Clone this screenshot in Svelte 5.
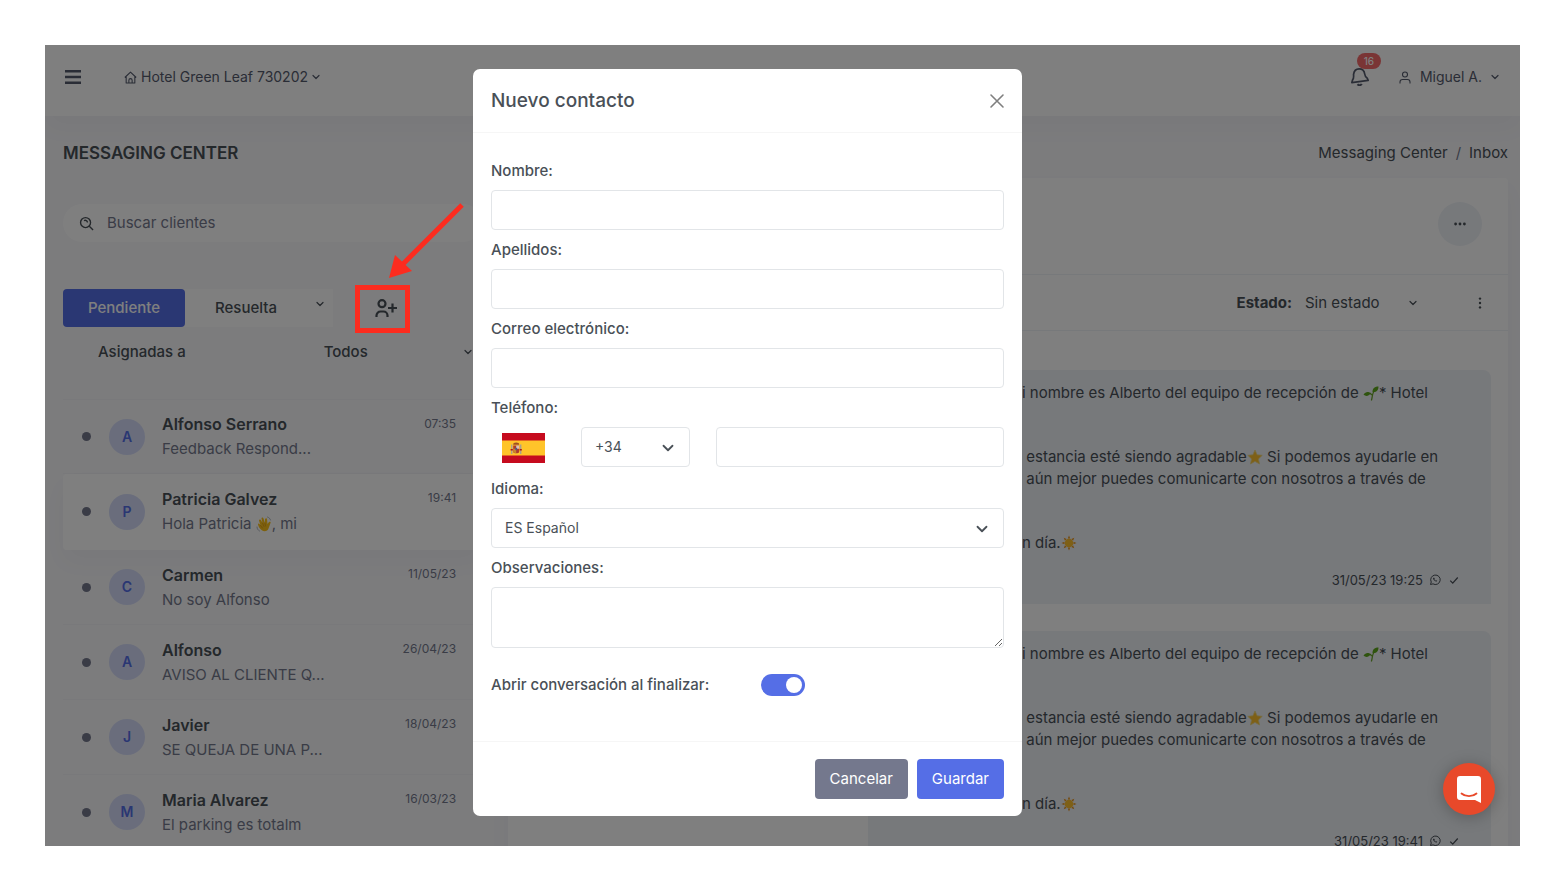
<script lang="ts">
  type Conversation = {
    name: string;
    preview: string;
    wave?: string;
    date: string;
    selected?: boolean;
  };

  const conversations: Conversation[] = [
    { name: 'Alfonso Serrano', preview: 'Feedback Respond...', date: '07:35' },
    { name: 'Patricia Galvez', preview: 'Hola Patricia ', wave: ', mi', date: '19:41', selected: true },
    { name: 'Carmen', preview: 'No soy Alfonso', date: '11/05/23' },
    { name: 'Alfonso', preview: 'AVISO AL CLIENTE Q...', date: '26/04/23' },
    { name: 'Javier', preview: 'SE QUEJA DE UNA P...', date: '18/04/23' },
    { name: 'Maria Alvarez', preview: 'El parking es totalm', date: '16/03/23' }
  ];

  const messageTimes = ['31/05/23 19:25', '31/05/23 19:41'];

  let search = $state('');
  let showModal = $state(true);
  let contact = $state({
    firstName: '',
    lastName: '',
    email: '',
    prefix: '+34',
    phone: '',
    language: 'es',
    notes: '',
    openConversation: true
  });

  function closeModal() {
    showModal = false;
  }

  function saveContact(event: SubmitEvent) {
    event.preventDefault();
    closeModal();
  }
</script>

{#snippet chevron(size: number)}
  <svg class="chevron" width={size} height={size} viewBox="0 0 16 16" fill="none" stroke="currentColor" stroke-width="2.4" stroke-linecap="round" stroke-linejoin="round" aria-hidden="true">
    <path d="M2 5l6 6 6-6" />
  </svg>
{/snippet}

{#snippet waveEmoji()}
  <svg class="emoji" viewBox="0 0 32 32" role="img" aria-label="saludo">
    <path d="M11 28C7 25 5 21 4 17c0-2 2-3 3-1l2 3L6 9c0-2 3-3 4-1l3 6-2-9c0-2 3-3 4 0l3 9 0-8c1-2 4-2 4 0l1 10 3-4c2-1 4 0 3 2l-4 11c-2 6-9 7-14 3z" fill="#fcc21b" />
    <path d="M13 14l3 7M18 14l1 6M9 19l4 5" stroke="#d89412" stroke-width="1.4" fill="none" stroke-linecap="round" />
    <path d="M2 22c0 4 2 6 5 8M23 2c3 1 5 3 6 6" stroke="#9aa3ad" stroke-width="1.6" fill="none" stroke-linecap="round" />
  </svg>
{/snippet}

{#snippet seedlingEmoji()}
  <svg class="emoji" viewBox="0 0 32 32" role="img" aria-label="brote">
    <path d="M17 30c2-6 1-11 5-18M18 20c-2-3-5-4-8-4" stroke="#6aa52b" stroke-width="2.6" fill="none" stroke-linecap="round" />
    <path d="M19 14c0-8 5-11 12-11 0 7-4 12-12 11z" fill="#5fa81d" />
    <path d="M15 17c-4 6-10 6-14 2 4-6 10-7 14-2z" fill="#5fa81d" />
  </svg>
{/snippet}

{#snippet starEmoji()}
  <svg class="emoji" viewBox="0 0 32 32" role="img" aria-label="estrella">
    <path d="M16 2l4.3 9.6 10.2 1-7.6 7.2 2.2 10.2L16 24.8 6.900 30l2.200-10.200-7.600-7.200 10.200-1z" fill="#fdc02f" stroke="#eadb8a" stroke-width="1.6" stroke-linejoin="round" />
  </svg>
{/snippet}

{#snippet sunEmoji()}
  <svg class="emoji" viewBox="0 0 32 32" role="img" aria-label="sol">
    <path d="M16 1l2.5 6h-5zM16 31l2.5-6h-5zM1 16l6-2.5v5zM31 16l-6-2.5v5zM5.4 5.4l6 2.5-3.5 3.5zM26.6 5.4l-2.500 6-3.500-3.500zM5.4 26.6l2.500-6 3.500 3.500zM26.6 26.6l-6-2.500 3.500-3.500z" fill="#e8951c" />
    <circle cx="16" cy="16" r="8.5" fill="#fdc02f" />
  </svg>
{/snippet}

{#snippet message(time: string)}
  <article class="bubble">
    <p>
      <span class="line"><span class="lead">Hola Patricia, m</span>i nombre es Alberto del equipo de recepción de {@render seedlingEmoji()}* Hotel</span>
      <span class="line">Green Leaf</span>
    </p>
    <p>
      <span class="line"><span class="lead">Espero que su</span>&nbsp;estancia esté siendo agradable{@render starEmoji()} Si podemos ayudarle en</span>
      <span class="line"><span class="lead">que sea</span>&nbsp;aún mejor puedes comunicarte con nosotros a través de</span>
      <span class="line">este chat.</span>
    </p>
    <p>
      <span class="line"><span class="lead">Bue</span>n día.{@render sunEmoji()}</span>
    </p>
    <footer class="bubble-meta">
      <time>{time}</time>
      <svg width="12" height="12" viewBox="0 0 24 24" fill="none" stroke="currentColor" stroke-width="2" role="img" aria-label="WhatsApp">
        <path d="M3 21l1.500-5A9.500 9.500 0 1 1 8 19.700z" />
        <path d="M8.500 7.500c-1 1-.5 3 1.500 5s4 3 5.500 2.500l1-1.500-2.200-1.200-1.100.9c-1-.4-2-1.400-2.400-2.400l.9-1-1.100-2.300z" fill="currentColor" stroke="none" />
      </svg>
      <svg class="tick" width="10" height="10" viewBox="0 0 16 16" fill="none" stroke="currentColor" stroke-width="2" aria-hidden="true">
        <path d="M2 9l4 4 8-9" />
      </svg>
    </footer>
  </article>
{/snippet}

<div class="page">
  <div class="app">
    <header class="topbar">
      <div class="topbar-left">
        <button type="button" class="menu-btn" aria-label="Menú">
          <svg width="16" height="14" viewBox="0 0 16 14" aria-hidden="true">
            <path d="M0 0h16v2.6H0zM0 5.700h16v2.600H0zM0 11.400h16V14H0z" fill="currentColor" />
          </svg>
        </button>
        <button type="button" class="hotel-btn">
          <svg width="13" height="13" viewBox="0 0 24 24" fill="none" stroke="currentColor" stroke-width="2" stroke-linejoin="round" aria-hidden="true">
            <path d="M1.500 12L12 2l10.500 10M4 10v12h16V10M9 22v-5a3 3 0 0 1 6 0v5" />
          </svg>
          Hotel Green Leaf 730202
          {@render chevron(8)}
        </button>
      </div>
      <div class="topbar-right">
        <button type="button" class="bell-btn" aria-label="Notificaciones">
          <svg width="18" height="18" viewBox="2 3 21 21" fill="none" stroke="currentColor" stroke-width="2" stroke-linejoin="round" aria-hidden="true">
            <path d="M3 20l1-3.500c1.500-1.500 1-4 1-6C5.500 6.500 8 4 11.500 4s6 2.500 6.500 6c.3 2.500.5 3.500 3 5l1 2.500z" />
            <path d="M9.500 22c1.500 1.500 4 1.500 5-.5" stroke-width="2.400" />
          </svg>
          <span class="badge">16</span>
        </button>
        <button type="button" class="user-btn">
          <svg width="12" height="13" viewBox="0 0 24 26" fill="none" stroke="currentColor" stroke-width="2.200" aria-hidden="true">
            <circle cx="12" cy="7" r="5" />
            <path d="M2 25v-3a5 5 0 0 1 5-5h10a5 5 0 0 1 5 5v3" />
          </svg>
          <span>Miguel A.</span>
          {@render chevron(8)}
        </button>
      </div>
    </header>

    <main class="content">
      <div class="title-row">
        <h1>MESSAGING CENTER</h1>
        <nav class="breadcrumb" aria-label="Ruta">
          <a href="#center">Messaging Center</a>
          <span class="separator">/</span>
          <a href="#inbox">Inbox</a>
        </nav>
      </div>

      <div class="columns">
        <aside class="sidebar">
          <label class="search">
            <svg width="15" height="15" viewBox="0 0 24 24" fill="none" stroke="currentColor" stroke-width="2.200" aria-hidden="true">
              <circle cx="10.500" cy="10.500" r="8" />
              <path d="M16.500 16.500l6 6M8 7.500c2.500-1.500 5.500 0 5.500 3" />
            </svg>
            <input type="search" placeholder="Buscar clientes" aria-label="Buscar clientes" bind:value={search} />
          </label>

          <div class="filters">
            <div class="tabs">
              <button type="button" class="tab active">Pendiente</button>
              <button type="button" class="tab">Resuelta</button>
              <button type="button" class="tab-more" aria-label="Más estados">{@render chevron(8)}</button>
            </div>
            <div class="add-contact">
              <button type="button" class="add-btn" aria-label="Nuevo contacto" onclick={() => (showModal = true)}>
                <svg width="22" height="18" viewBox="0 0 22 18" fill="none" stroke="currentColor" stroke-width="2.200" aria-hidden="true">
                  <circle cx="7" cy="4.700" r="3.500" />
                  <path d="M1.500 18v-1.500a4 4 0 0 1 4-4h3a4 4 0 0 1 4 4V18M17.500 4.500v9M13 9h9" />
                </svg>
              </button>
              <span class="highlight"></span>
              <svg class="arrow" width="80" height="80" viewBox="0 0 80 80" aria-hidden="true">
                <path d="M76 3L16 63" stroke="#fc2c1f" stroke-width="5" />
                <path d="M3 76L9 53L26 69z" fill="#fc2c1f" />
              </svg>
            </div>
          </div>

          <div class="assigned">
            <span>Asignadas a</span>
            <button type="button">Todos {@render chevron(8)}</button>
          </div>

          <ul class="conversations">
            {#each conversations as item}
              <li class:selected={item.selected}>
                <span class="dot"></span>
                <span class="avatar">{item.name[0]}</span>
                <div class="summary">
                  <div class="name">{item.name}</div>
                  <div class="preview">{item.preview}{#if item.wave}{@render waveEmoji()}{item.wave}{/if}</div>
                </div>
                <time>{item.date}</time>
              </li>
            {/each}
          </ul>
        </aside>

        <section class="chat">
          <div class="chat-head">
            <button type="button" class="round-btn" aria-label="Más opciones">
              <svg width="12" height="4" viewBox="0 0 12 4" fill="currentColor" aria-hidden="true">
                <circle cx="1.600" cy="2" r="1.400" /><circle cx="6" cy="2" r="1.400" /><circle cx="10.400" cy="2" r="1.400" />
              </svg>
            </button>
          </div>
          <div class="chat-status">
            <label for="status">Estado:</label>
            <div class="select-wrap status-select">
              <select id="status"><option>Sin estado</option></select>
              {@render chevron(8)}
            </div>
            <button type="button" class="dots-btn" aria-label="Opciones de la conversación">
              <svg width="4" height="12" viewBox="0 0 4 12" fill="currentColor" aria-hidden="true">
                <circle cx="2" cy="1.600" r="1.200" /><circle cx="2" cy="6" r="1.200" /><circle cx="2" cy="10.400" r="1.200" />
              </svg>
            </button>
          </div>
          <div class="messages">
            {#each messageTimes as time}
              {@render message(time)}
            {/each}
          </div>
        </section>
      </div>
    </main>

    {#if showModal}
      <div class="backdrop">
        <form class="modal" role="dialog" aria-modal="true" aria-labelledby="modal-title" onsubmit={saveContact}>
          <div class="modal-header">
            <h2 id="modal-title">Nuevo contacto</h2>
            <button type="button" class="close-btn" aria-label="Cerrar" onclick={closeModal}>
              <svg width="16" height="16" viewBox="0 0 16 16" fill="none" stroke="currentColor" stroke-width="1.600" stroke-linecap="round" aria-hidden="true">
                <path d="M2 2l12 12M14 2L2 14" />
              </svg>
            </button>
          </div>

          <div class="modal-body">
            <label for="first-name">Nombre:</label>
            <input id="first-name" class="control" type="text" bind:value={contact.firstName} />

            <label for="last-name">Apellidos:</label>
            <input id="last-name" class="control" type="text" bind:value={contact.lastName} />

            <label for="email">Correo electrónico:</label>
            <input id="email" class="control" type="email" bind:value={contact.email} />

            <label for="phone">Teléfono:</label>
            <div class="phone-row">
              <svg class="flag" width="43" height="30" viewBox="0 0 43 30" role="img" aria-label="España">
                <path d="M0 0h43v30H0z" fill="#c60b1e" />
                <path d="M0 7.500h43v15H0z" fill="#ffc42a" />
                <path d="M9 11.500h1.400V21H9zM18 11.500h1.400V21H18z" fill="#a9a08e" />
                <path d="M8.600 16h2.200v1.600H8.600zM17.600 16h2.200v1.600h-2.200z" fill="#ad1519" />
                <path d="M11.200 12.500h6v6.300c0 2-6 2-6 0z" fill="#ad3a30" />
                <path d="M14.200 12.500h3v3.300h-3z" fill="#d9c3bc" />
                <path d="M11.200 15.800h3v4.300c-1.500 0-3-.4-3-1.300z" fill="#c9852c" />
                <ellipse cx="14.200" cy="16" rx="1" ry="1.300" fill="#4b5a85" />
                <path d="M11.200 11.800c-.8-3 6.800-3 6 0z" fill="#a04f22" />
              </svg>
              <div class="select-wrap prefix">
                <select class="control" aria-label="Prefijo" bind:value={contact.prefix}>
                  <option value="+34">+34</option>
                </select>
                {@render chevron(12)}
              </div>
              <input id="phone" class="control" type="tel" bind:value={contact.phone} />
            </div>

            <label for="language">Idioma:</label>
            <div class="select-wrap">
              <select id="language" class="control" bind:value={contact.language}>
                <option value="es">ES Español</option>
              </select>
              {@render chevron(12)}
            </div>

            <label for="notes">Observaciones:</label>
            <textarea id="notes" class="control" bind:value={contact.notes}></textarea>

            <div class="switch-row">
              <label for="open-conversation">Abrir conversación al finalizar:</label>
              <input id="open-conversation" class="switch" type="checkbox" bind:checked={contact.openConversation} />
            </div>
          </div>

          <div class="modal-footer">
            <button type="button" class="btn secondary" onclick={closeModal}>Cancelar</button>
            <button type="submit" class="btn primary">Guardar</button>
          </div>
        </form>
      </div>
    {/if}

    <button type="button" class="chat-launcher" aria-label="Abrir chat de ayuda">
      <svg width="26" height="28" viewBox="0 0 26 28" aria-hidden="true">
        <path d="M4 1h18a3 3 0 0 1 3 3v24l-6-3H4a3 3 0 0 1-3-3V4a3 3 0 0 1 3-3z" fill="#fff" />
        <path d="M5.500 18.500c4 3.600 11 3.600 15 0" fill="none" stroke="#e8492a" stroke-width="1.800" stroke-linecap="round" />
      </svg>
    </button>
  </div>
</div>

<style>
  :global(body) {
    margin: 0;
    background: #fff;
  }

  .page {
    box-sizing: border-box;
    height: 100vh;
    padding: 45px 42px 36px 45px;
    font-family: Inter, 'Open Sans', sans-serif;
    font-size: 15px;
    line-height: 22px;
    color: #495057;
  }

  .page :global(*) {
    box-sizing: border-box;
  }

  .app {
    position: relative;
    display: flex;
    flex-direction: column;
    height: 100%;
    overflow: hidden;
    background: #f8f8fb;
  }

  button,
  input,
  select,
  textarea {
    font: inherit;
    color: inherit;
  }

  button {
    display: inline-flex;
    align-items: center;
    padding: 0;
    border: 0;
    background: none;
    cursor: pointer;
  }

  svg {
    flex: none;
  }

  h1,
  h2,
  p,
  ul {
    margin: 0;
    padding: 0;
  }

  a {
    color: inherit;
    text-decoration: none;
  }

  .topbar {
    display: flex;
    flex: none;
    justify-content: space-between;
    height: 71px;
    padding: 0 21px 7px 20px;
    background: #fff;
    color: #555b6d;
    font-size: 14px;
    box-shadow: 0 12px 24px rgba(18, 38, 63, 0.03);
  }

  .topbar-left,
  .topbar-right {
    display: flex;
    align-items: center;
  }

  .topbar-left {
    gap: 43px;
  }

  .topbar-right {
    gap: 30px;
  }

  .hotel-btn {
    gap: 4px;
  }

  .bell-btn {
    position: relative;
  }

  .badge {
    position: absolute;
    left: 6px;
    top: -15px;
    width: 24px;
    border-radius: 8px;
    background: #f46a6a;
    color: #fff;
    font-size: 10px;
    font-weight: 500;
    line-height: 16px;
    text-align: center;
  }

  .user-btn {
    gap: 9px;
  }

  .content {
    flex: 1;
    min-height: 0;
    padding: 25px 12px 0 18px;
  }

  .title-row {
    display: flex;
    justify-content: space-between;
    align-items: center;
    height: 24px;
  }

  h1 {
    font-size: 17px;
    font-weight: 600;
  }

  .breadcrumb {
    display: flex;
    gap: 8px;
  }

  .separator {
    color: #74788d;
  }

  .columns {
    display: grid;
    grid-template-columns: 29% 1fr;
    gap: 26px;
    padding-top: 13px;
  }

  .sidebar {
    min-width: 0;
    padding-top: 26px;
  }

  .search {
    display: flex;
    align-items: center;
    gap: 13px;
    height: 38px;
    padding: 0 16px;
    border-radius: 30px;
    background: #fff;
  }

  .search input {
    flex: 1;
    min-width: 0;
    padding: 0;
    border: 0;
    outline: 0;
    background: none;
  }

  .search input::placeholder {
    color: #74788d;
    opacity: 1;
  }

  .filters {
    display: flex;
    gap: 22px;
    margin-top: 47px;
  }

  .tabs {
    display: flex;
    height: 38px;
    background: #fff;
  }

  .tab {
    justify-content: center;
    width: 122px;
    border-radius: 4px;
    font-weight: 500;
  }

  .tab.active {
    background: #556ee6;
    color: #fff;
  }

  .tab-more {
    justify-content: center;
    width: 26px;
    padding-bottom: 8px;
  }

  .add-contact {
    position: relative;
    display: flex;
    width: 55px;
    padding-left: 7px;
    justify-content: center;
  }

  .highlight {
    position: absolute;
    z-index: 30;
    inset: -4px 0 -6px;
    border: 5px solid #fc2c1f;
    pointer-events: none;
  }

  .arrow {
    position: absolute;
    z-index: 30;
    left: 31px;
    bottom: 45px;
    pointer-events: none;
  }

  .assigned {
    display: flex;
    align-items: center;
    gap: 138px;
    height: 50px;
    padding: 0 10px 0 35px;
    font-weight: 500;
    white-space: nowrap;
  }

  .assigned button {
    flex: 1;
    justify-content: space-between;
    font-weight: 500;
  }

  .conversations {
    margin-top: 22px;
    list-style: none;
  }

  .conversations li {
    display: flex;
    align-items: center;
    height: 75px;
    padding: 0 26px 0 19px;
    border-bottom: 1px solid #f2f2f6;
  }

  .conversations li:first-child {
    border-top: 1px solid #f2f2f6;
  }

  .conversations li.selected {
    height: 76px;
    border-color: #fff;
    border-radius: 4px;
    background: #fff;
    box-shadow: 0 12px 24px rgba(18, 38, 63, 0.03);
  }

  .dot {
    width: 9px;
    height: 9px;
    border-radius: 50%;
    background: #74788d;
  }

  .avatar {
    width: 36px;
    margin: 0 17px 0 18px;
    border-radius: 50%;
    background: #d4dbf9;
    color: #556ee6;
    font-size: 14px;
    font-weight: 600;
    line-height: 36px;
    text-align: center;
  }

  .summary {
    flex: 1;
    min-width: 0;
    color: #74788d;
    white-space: nowrap;
  }

  .name {
    margin-bottom: 3px;
    color: #495057;
    font-size: 16px;
    font-weight: 600;
  }

  .conversations time {
    align-self: flex-start;
    padding-top: 13px;
    color: #74788d;
    font-size: 12px;
  }

  .emoji {
    width: 16px;
    height: 16px;
    vertical-align: -3px;
  }

  .chat {
    min-width: 0;
    border-radius: 4px;
    background: #fff;
    box-shadow: 0 12px 24px rgba(18, 38, 63, 0.03);
  }

  .chat-head,
  .chat-status {
    display: flex;
    align-items: center;
    justify-content: flex-end;
    padding: 0 26px;
    border-bottom: 1px solid #eff2f7;
  }

  .chat-head {
    height: 97px;
    padding-bottom: 4px;
  }

  .round-btn {
    justify-content: center;
    width: 44px;
    height: 44px;
    border-radius: 50%;
    background: #eff2f7;
  }

  .chat-status {
    height: 56px;
  }

  .chat-status label {
    font-weight: 700;
  }

  .status-select {
    width: 112px;
    margin: 0 61px 0 13px;
  }

  .status-select select {
    padding: 0;
    border: 0;
    background: none;
  }

  .messages {
    display: flex;
    flex-direction: column;
    gap: 27px;
    padding: 39px 17px 0 36%;
  }

  .bubble {
    padding: 12px 20px 14px;
    border-radius: 8px 8px 0 8px;
    background: #eff2f7;
  }

  .bubble p {
    margin-bottom: 20px;
  }

  .line {
    display: block;
    white-space: nowrap;
  }

  .lead {
    display: inline-block;
    width: 134px;
    text-align: right;
  }

  .bubble-meta {
    display: flex;
    align-items: center;
    justify-content: flex-end;
    gap: 6px;
    margin-top: -4px;
    padding-right: 12px;
    font-size: 13px;
    line-height: 20px;
  }

  .tick {
    margin-left: 2px;
  }

  .backdrop {
    position: absolute;
    z-index: 10;
    inset: 0;
    display: flex;
    justify-content: center;
    align-items: flex-start;
    padding: 24px 70px 0 0;
    background: rgba(0, 0, 0, 0.5);
  }

  .modal {
    width: 549px;
    border-radius: 7px;
    background: #fff;
  }

  .modal-header {
    display: flex;
    align-items: center;
    justify-content: space-between;
    height: 64px;
    padding: 0 17px 0 18px;
    border-bottom: 1px solid #f6f6f6;
  }

  h2 {
    font-size: 19px;
    font-weight: 500;
  }

  .close-btn {
    color: #7f7f7f;
  }

  .modal-body {
    display: flex;
    flex-direction: column;
    padding: 27px 18px 45px;
  }

  .modal-body label {
    font-weight: 500;
  }

  .control {
    width: 100%;
    height: 40px;
    margin: 8px 0 9px;
    padding: 0 13px;
    border: 1px solid #e2e5e8;
    border-radius: 4px;
    outline: 0;
    background: #fff;
    font-size: 14px;
  }

  .control:focus {
    border-color: #b9bfc4;
  }

  textarea.control {
    height: 61px;
    margin-bottom: 0;
    padding: 8px 13px;
    resize: vertical;
  }

  .select-wrap {
    display: grid;
    align-items: center;
  }

  .select-wrap select {
    grid-area: 1 / 1;
    appearance: none;
  }

  .select-wrap :global(.chevron) {
    grid-area: 1 / 1;
    justify-self: end;
    pointer-events: none;
  }

  .select-wrap select.control + :global(.chevron) {
    margin-right: 16px;
  }

  .phone-row {
    display: flex;
    align-items: center;
    margin-bottom: 2px;
  }

  .flag {
    margin: 0 36px 0 11px;
  }

  .prefix {
    flex: none;
    width: 109px;
    margin-right: 26px;
  }

  .switch-row {
    display: flex;
    align-items: center;
    gap: 52px;
    padding-top: 26px;
  }

  .switch {
    width: 44px;
    height: 22px;
    margin: 0;
    padding: 3px;
    appearance: none;
    border-radius: 11px;
    background: #bfc4cc;
  }

  .switch::before {
    content: '';
    display: block;
    width: 16px;
    height: 16px;
    border-radius: 50%;
    background: #fff;
  }

  .switch:checked {
    background: #556ee6;
  }

  .switch:checked::before {
    margin-left: auto;
  }

  .modal-footer {
    display: flex;
    justify-content: flex-end;
    gap: 9px;
    padding: 17px 18px;
    border-top: 1px solid #f6f6f6;
  }

  .btn {
    height: 40px;
    padding: 0 15px;
    border-radius: 4px;
    color: #fff;
  }

  .btn.secondary {
    background: #74788d;
  }

  .btn.primary {
    background: #556ee6;
  }

  .chat-launcher {
    position: absolute;
    z-index: 20;
    right: 25px;
    bottom: 31px;
    justify-content: center;
    width: 52px;
    height: 52px;
    border-radius: 50%;
    background: #e8492a;
    box-shadow: 0 2px 16px rgba(0, 0, 0, 0.25);
  }
</style>
